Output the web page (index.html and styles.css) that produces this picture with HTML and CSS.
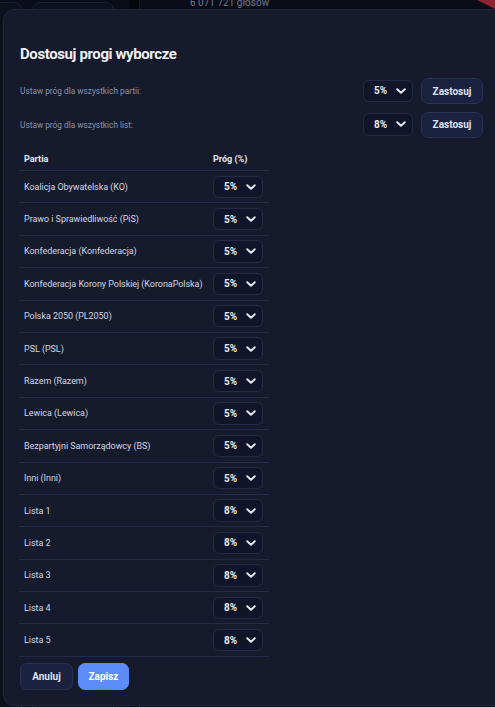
FILE: index.html
```html
<!DOCTYPE html>
<html lang="pl">
<head>
<meta charset="utf-8">
<title>Dostosuj progi wyborcze</title>
<link rel="stylesheet" href="styles.css">
</head>
<body>
<div class="backdrop">
  <div class="bg-card bg-card-a"></div>
  <div class="bg-card bg-card-b"></div>
  <div class="bg-col"></div>
  <div class="bg-votes">6 071 721 głosów</div>
  <div class="bg-red"></div>
</div>

<div class="modal">
  <h2 class="title">Dostosuj progi wyborcze</h2>

  <div class="setting">
    <span class="setting-label">Ustaw próg dla wszystkich partii:</span>
    <div class="setting-controls">
      <div class="select select-wide"><span class="select-val">5%</span><svg class="chev" viewBox="0 0 10 6"><path d="M1.2 1.2 L5 4.8 L8.8 1.2"/></svg></div>
      <button class="btn btn-secondary btn-apply">Zastosuj</button>
    </div>
  </div>
  <div class="setting">
    <span class="setting-label">Ustaw próg dla wszystkich list:</span>
    <div class="setting-controls">
      <div class="select select-wide"><span class="select-val">8%</span><svg class="chev" viewBox="0 0 10 6"><path d="M1.2 1.2 L5 4.8 L8.8 1.2"/></svg></div>
      <button class="btn btn-secondary btn-apply">Zastosuj</button>
    </div>
  </div>

  <table class="table">
    <thead>
      <tr><th class="col-name">Partia</th><th class="col-thr">Próg (%)</th></tr>
    </thead>
    <tbody id="rows"></tbody>
  </table>

  <div class="footer">
    <button class="btn btn-secondary">Anuluj</button>
    <button class="btn btn-primary">Zapisz</button>
  </div>
</div>
<script src="script.js"></script>
</body>
</html>
```

FILE: script.js
```js
var rows = [
  ["Koalicja Obywatelska (KO)", "5%"],
  ["Prawo i Sprawiedliwość (PiS)", "5%"],
  ["Konfederacja (Konfederacja)", "5%"],
  ["Konfederacja Korony Polskiej (KoronaPolska)", "5%"],
  ["Polska 2050 (PL2050)", "5%"],
  ["PSL (PSL)", "5%"],
  ["Razem (Razem)", "5%"],
  ["Lewica (Lewica)", "5%"],
  ["Bezpartyjni Samorządowcy (BS)", "5%"],
  ["Inni (Inni)", "5%"],
  ["Lista 1", "8%"],
  ["Lista 2", "8%"],
  ["Lista 3", "8%"],
  ["Lista 4", "8%"],
  ["Lista 5", "8%"]
];
var tb = document.getElementById("rows");
var html = "";
rows.forEach(function (r) {
  html += '<tr><td class="col-name">' + r[0] + '</td><td class="col-thr">' +
    '<div class="select"><span class="select-val">' + r[1] + '</span>' +
    '<svg class="chev" viewBox="0 0 10 6"><path d="M1.2 1.2 L5 4.8 L8.8 1.2"/></svg></div></td></tr>';
});
tb.innerHTML = html;
```

FILE: styles.css
```css
* { box-sizing: border-box; }

html, body {
  margin: 0;
  padding: 0;
  width: 495px;
  height: 707px;
  overflow: hidden;
  background: #0a0d17;
  font-family: Roboto, "Liberation Sans", sans-serif;
}

.backdrop {
  position: absolute;
  inset: 0;
  overflow: hidden;
}
.bg-card {
  position: absolute;
  top: 2px;
  height: 800px;
  border: 1px solid #1a2034;
  border-radius: 8px;
  background: #0d111c;
}
.bg-card-a { left: -20px; width: 42px; }
.bg-card-b { left: 32px; width: 82px; }
.bg-col {
  position: absolute;
  left: 129px;
  top: 0;
  width: 11px;
  height: 800px;
  background: #05070d;
  border-right: 1px solid #161b2a;
}
.bg-votes {
  position: absolute;
  left: 190px;
  top: -3px;
  font-size: 10px;
  line-height: 12px;
  color: #6f7789;
}
.bg-red {
  position: absolute;
  right: 0;
  top: 0;
  width: 0;
  height: 0;
  border-top: 9px solid #8e2330;
  border-left: 18px solid transparent;
}

.modal {
  position: absolute;
  left: 3px;
  top: 9px;
  width: 504px;
  height: 697px;
  padding: 34px 23px 0 16px;
  background: #151a2d;
  border: 1px solid #1f2640;
  border-radius: 11px;
}

.title {
  margin: 0 0 14px 0;
  font-size: 15px;
  line-height: 20px;
  font-weight: 700;
  letter-spacing: -0.4px;
  color: #eef0f6;
}

.setting {
  display: flex;
  align-items: center;
  justify-content: space-between;
  height: 26px;
  margin-bottom: 7.5px;
}
.setting-label {
  font-size: 8.3px;
  color: #8b93a7;
}
.setting-controls {
  display: flex;
  align-items: center;
  gap: 8px;
}

.select {
  display: flex;
  align-items: center;
  justify-content: space-between;
  width: 50px;
  height: 22.4px;
  padding: 0 6px 0 10px;
  background: #10152a;
  border: 1px solid #232b45;
  border-radius: 6px;
}
.select-val {
  font-size: 10px;
  font-weight: 700;
  color: #e9ebf2;
}
.chev {
  width: 10px;
  height: 6px;
  fill: none;
  stroke: #e6e8ef;
  stroke-width: 1.9;
  stroke-linecap: round;
  stroke-linejoin: round;
}

.btn {
  font-family: Roboto, "Liberation Sans", sans-serif;
  font-size: 10px;
  font-weight: 700;
  height: 27px;
  border-radius: 7px;
  padding: 0 10px;
  cursor: pointer;
}
.btn-apply { width: 62px; height: 26px; padding: 0; }
.btn-secondary {
  background: #1b2240;
  border: 1px solid #29314f;
  color: #dfe3ef;
}
.btn-primary {
  background: #5b8cf8;
  border: 1px solid #5b8cf8;
  color: #ffffff;
}

.table {
  margin-top: 10.5px;
  border-collapse: collapse;
  table-layout: fixed;
  width: 250px;
  margin-left: -1px;
}
.table th {
  font-size: 9px;
  font-weight: 700;
  color: #e6e9f1;
  text-align: left;
  padding: 5px 5px;
  line-height: 12px;
  border-bottom: 1px solid #222c48;
}
.table td {
  font-size: 9px;
  color: #d3d7e2;
  padding: 4.5px 5px;
  border-bottom: 1px solid #222c48;
  height: 32.37px;
  white-space: nowrap;
}
.table td.col-name { letter-spacing: -0.05px; overflow: visible; }
.col-name { width: 189px; }
.col-thr { width: 61px; }

.footer {
  display: flex;
  gap: 5px;
  margin-top: 6px;
}
.footer .btn { width: 53px; padding: 0; }
.footer .btn-primary { width: 51px; }
```
